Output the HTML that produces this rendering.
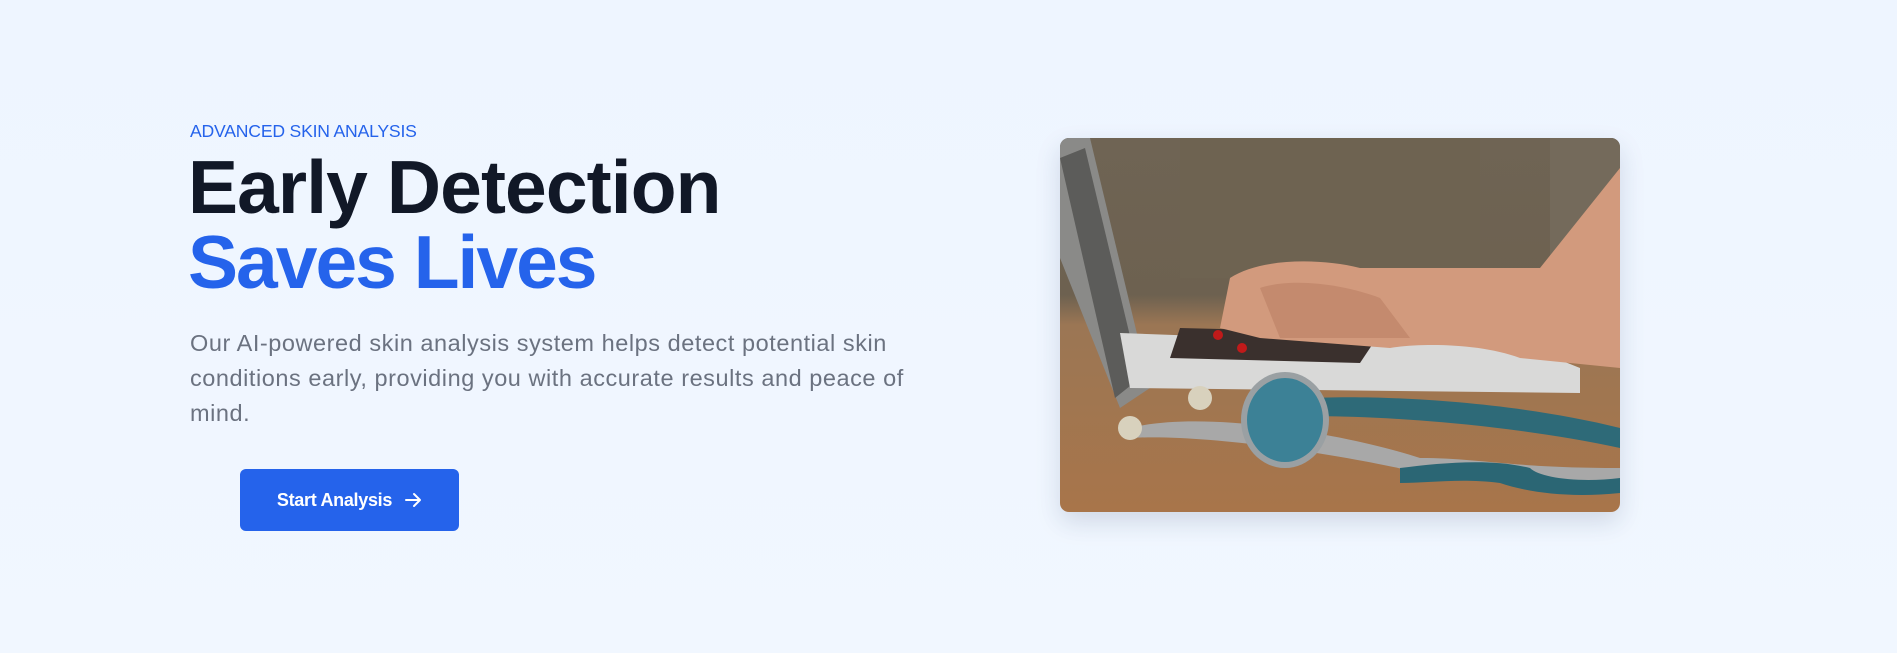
<!DOCTYPE html>
<html><head><meta charset="utf-8"><style>
*{margin:0;padding:0;box-sizing:border-box}
html,body{width:1897px;height:653px;overflow:hidden;background:linear-gradient(180deg,#eef5ff,#f1f7ff);font-family:"Liberation Sans",sans-serif}
.label{position:absolute;left:190px;top:121px;font-size:17.6px;color:#2563eb;letter-spacing:-0.2px}
h1{position:absolute;left:188px;top:150px;font-size:75px;line-height:75px;font-weight:700;color:#111827;letter-spacing:-0.9px}
h1 span{color:#2563eb;letter-spacing:-2px}
p{position:absolute;left:190px;top:326px;width:780px;font-size:23.5px;line-height:35px;color:#6b7280;letter-spacing:0.55px}
.btn{position:absolute;left:240px;top:469px;width:219px;height:62px;background:#2563eb;border-radius:6px;color:#fff;font-weight:700;font-size:18px;display:flex;align-items:center;justify-content:center;gap:12px;letter-spacing:-0.3px}
.img{position:absolute;left:1060px;top:138px;width:560px;height:374px;border-radius:9px;overflow:hidden;box-shadow:0 10px 25px rgba(30,50,90,.15)}
</style></head><body>
<div class="label">ADVANCED SKIN ANALYSIS</div>
<h1>Early Detection<br><span>Saves Lives</span></h1>
<p>Our AI-powered skin analysis system helps detect potential skin conditions early, providing you with accurate results and peace of mind.</p>
<div class="btn">Start Analysis <svg width="18" height="18" viewBox="0 0 18 18" fill="none" stroke="#fff" stroke-width="2" stroke-linecap="round" stroke-linejoin="round"><path d="M2 9h14M10 3l6 6-6 6"/></svg></div>
<div class="img"><svg width="560" height="374" viewBox="0 0 560 374">
<defs>
<linearGradient id="w" x1="0" y1="0" x2="0" y2="1"><stop offset="0" stop-color="#6f6454"/><stop offset=".42" stop-color="#6d6150"/><stop offset=".5" stop-color="#9b7654"/><stop offset="1" stop-color="#a8754a"/></linearGradient>
</defs>
<rect width="560" height="374" fill="url(#w)"/>
<rect x="120" y="0" width="300" height="140" fill="#6e6351"/>
<rect x="490" y="0" width="70" height="140" fill="#746a5b"/>
<path d="M0 0 L30 0 L90 250 L60 270 L0 120Z" fill="#8a8a88"/>
<path d="M0 20 L25 10 L80 240 L55 260Z" fill="#5c5c5a"/>
<path d="M60 195 L470 210 L520 230 L520 255 L70 250Z" fill="#d9d9d8"/>
<path d="M120 190 L320 195 L300 225 L110 220Z" fill="#3a302d"/>
<path d="M170 140 C200 120 260 120 300 130 L480 130 L560 30 L560 230 L460 220 C420 205 360 205 330 210 L200 200 L160 190Z" fill="#d29a7d"/>
<path d="M200 150 C230 140 280 145 320 160 L350 200 L220 200Z" fill="#c48a6e"/>
<circle cx="158" cy="197" r="5" fill="#c01a1a"/><circle cx="182" cy="210" r="5" fill="#c01a1a"/>
<path d="M215 265 C240 255 420 255 560 290 L560 310 C420 280 260 275 215 280Z" fill="#2e6a78"/>
<path d="M70 290 C150 270 300 300 360 320 C420 320 450 330 560 330 L560 345 C440 345 400 340 360 335 C300 320 150 295 70 300Z" fill="#a8a8a8"/>
<path d="M340 330 C380 325 430 320 470 330 C480 340 520 345 560 340 L560 355 C510 360 470 355 440 345 C400 340 370 345 340 345Z" fill="#2b6674"/>
<ellipse cx="225" cy="282" rx="44" ry="48" fill="#9aa0a3"/>
<ellipse cx="225" cy="282" rx="38" ry="42" fill="#3c8196"/>
<circle cx="70" cy="290" r="12" fill="#d8d1bd"/>
<circle cx="140" cy="260" r="12" fill="#d8d1bd"/>
</svg></div>
</body></html>
